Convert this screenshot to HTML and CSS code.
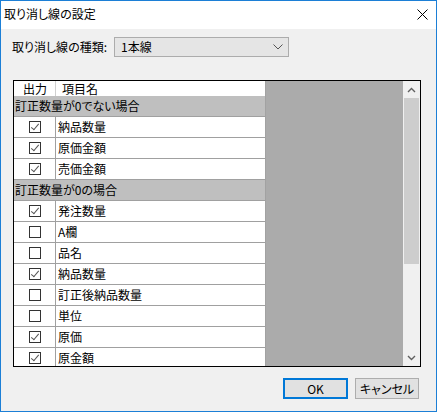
FILE: index.html
```html
<!DOCTYPE html>
<html lang="ja">
<head>
<meta charset="utf-8">
<title>取り消し線の設定</title>
<link rel="stylesheet" href="styles.css">
</head>
<body>
<div class="window">
  <div class="titlebar">
    <span class="title">取り消し線の設定</span>
    <svg class="close" width="11" height="11" viewBox="0 0 11 11"><path d="M0.5 0.5 L10.5 10.5 M10.5 0.5 L0.5 10.5" stroke="#000" stroke-width="1" fill="none"/></svg>
  </div>
  <div class="content">
    <div class="type-row">
      <span class="type-label">取り消し線の種類:</span>
      <div class="combo">
        <span class="combo-text">1本線</span>
        <svg class="combo-arrow" width="10" height="6" viewBox="0 0 10 6"><polyline points="0.5,0.5 5,5 9.5,0.5" stroke="#555" stroke-width="1" fill="none"/></svg>
      </div>
    </div>
    <div class="list">
      <div class="table">
        <div class="head">
          <div class="c1">出力</div>
          <div class="c2">項目名</div>
        </div>
        <div class="row group">訂正数量が0でない場合</div>
        <div class="row"><div class="c1"><span class="cb on"></span></div><div class="c2">納品数量</div></div>
        <div class="row"><div class="c1"><span class="cb on"></span></div><div class="c2">原価金額</div></div>
        <div class="row"><div class="c1"><span class="cb on"></span></div><div class="c2">売価金額</div></div>
        <div class="row group">訂正数量が0の場合</div>
        <div class="row"><div class="c1"><span class="cb on"></span></div><div class="c2">発注数量</div></div>
        <div class="row"><div class="c1"><span class="cb"></span></div><div class="c2">A欄</div></div>
        <div class="row"><div class="c1"><span class="cb"></span></div><div class="c2">品名</div></div>
        <div class="row"><div class="c1"><span class="cb on"></span></div><div class="c2">納品数量</div></div>
        <div class="row"><div class="c1"><span class="cb"></span></div><div class="c2">訂正後納品数量</div></div>
        <div class="row"><div class="c1"><span class="cb"></span></div><div class="c2">単位</div></div>
        <div class="row"><div class="c1"><span class="cb on"></span></div><div class="c2">原価</div></div>
        <div class="row"><div class="c1"><span class="cb on"></span></div><div class="c2">原金額</div></div>
      </div>
      <div class="empty"></div>
      <div class="scrollbar">
        <div class="sb-btn">
          <svg width="9" height="6" viewBox="0 0 9 6"><polyline points="1,5 4.5,1.5 8,5" stroke="#606060" stroke-width="1.4" fill="none"/></svg>
        </div>
        <div class="sb-track"><div class="sb-thumb"></div></div>
        <div class="sb-btn">
          <svg width="9" height="6" viewBox="0 0 9 6"><polyline points="1,1 4.5,4.5 8,1" stroke="#606060" stroke-width="1.4" fill="none"/></svg>
        </div>
      </div>
    </div>
    <div class="buttons">
      <button class="btn default">OK</button>
      <button class="btn">キャンセル</button>
    </div>
  </div>
</div>
</body>
</html>
```
FILE: styles.css
```css
* { box-sizing: border-box; }
html, body { margin: 0; padding: 0; background: #fff; }
body {
  font-family: "Noto Sans CJK JP", "Noto Sans", sans-serif;
  font-size: 12px;
  font-feature-settings: "palt";
  color: #000;
}
.window {
  width: 437px;
  height: 412px;
  border: 1px solid #1c7fd6;
  border-top-color: #1c7fd6;
  background: #f0f0f0;
  display: flex;
  flex-direction: column;
}
.titlebar {
  height: 28px;
  background: #fff;
  display: flex;
  align-items: center;
  justify-content: space-between;
  padding: 0 8px 3px 3px;
}
.title { line-height: 14px; }
.close { display: block; margin-top: 2px; }
.content {
  flex: 1;
  display: flex;
  flex-direction: column;
}
.type-row {
  display: flex;
  align-items: center;
  margin: 8px 0 0 11px;
  height: 20px;
}
.type-label {
  width: 102px;
  line-height: 14px;
}
.combo {
  width: 175px;
  height: 20px;
  background: #e5e5e5;
  border: 1px solid #acacac;
  display: flex;
  align-items: center;
  justify-content: space-between;
  padding: 0 5px 0 6px;
}
.combo-text { line-height: 14px; }
.combo-arrow { display: block; }
.list {
  margin: 23px 0 0 12px;
  width: 408px;
  height: 287px;
  border: 1px solid #000;
  display: flex;
  background: #fff;
}
.table {
  width: 251px;
  overflow: hidden;
  background: #fff;
}
.head {
  height: 15px;
  display: flex;
  background: #fff;
  line-height: 15px;
}
.head .c1 {
  width: 42px;
  text-align: center;
  border-right: 1px solid #d0d0d0;
  padding-left: 1px;
}
.head .c2 { padding-left: 6px; }
.row {
  height: 21px;
  border-bottom: 1px solid #a0a0a0;
  display: flex;
  align-items: center;
  background: #fff;
}
.row.group {
  background: #bfbfbf;
  padding-left: 1px;
  line-height: 20px;
}
.row .c1 {
  width: 42px;
  height: 20px;
  border-right: 1px solid #a0a0a0;
  display: flex;
  align-items: center;
  justify-content: center;
  padding-left: 1px;
}
.row .c2 {
  padding-left: 2px;
  line-height: 20px;
}
.cb {
  display: block;
  width: 12px;
  height: 12px;
  border: 1px solid #333;
  background: #fff;
  position: relative;
}
.cb.on::after {
  content: "";
  position: absolute;
  left: 3px;
  top: 0px;
  width: 3px;
  height: 7px;
  border-right: 1px solid #555;
  border-bottom: 1px solid #555;
  transform: rotate(40deg);
}
.empty {
  flex: 1;
  background: #ababab;
  border-left: 1px solid #a2a2a2;
}
.scrollbar {
  width: 17px;
  background: #f0f0f0;
  display: flex;
  flex-direction: column;
}
.sb-btn {
  height: 17px;
  display: flex;
  align-items: center;
  justify-content: center;
}
.sb-btn svg { display: block; }
.sb-track {
  flex: 1;
}
.sb-thumb {
  margin-left: 1px;
  width: 15px;
  height: 166px;
  background: #cdcdcd;
}
.buttons {
  display: flex;
  justify-content: flex-end;
  gap: 7px;
  margin: 11px 17px 0 0;
}
.btn {
  font-family: inherit;
  font-size: 12px;
  font-feature-settings: "palt";
  height: 21px;
  width: 64px;
  background: #e1e1e1;
  border: 1px solid #adadad;
  padding: 0;
  line-height: 17px;
  color: #000;
}
.btn.default {
  width: 65px;
  border: 2px solid #0078d7;
}
```
